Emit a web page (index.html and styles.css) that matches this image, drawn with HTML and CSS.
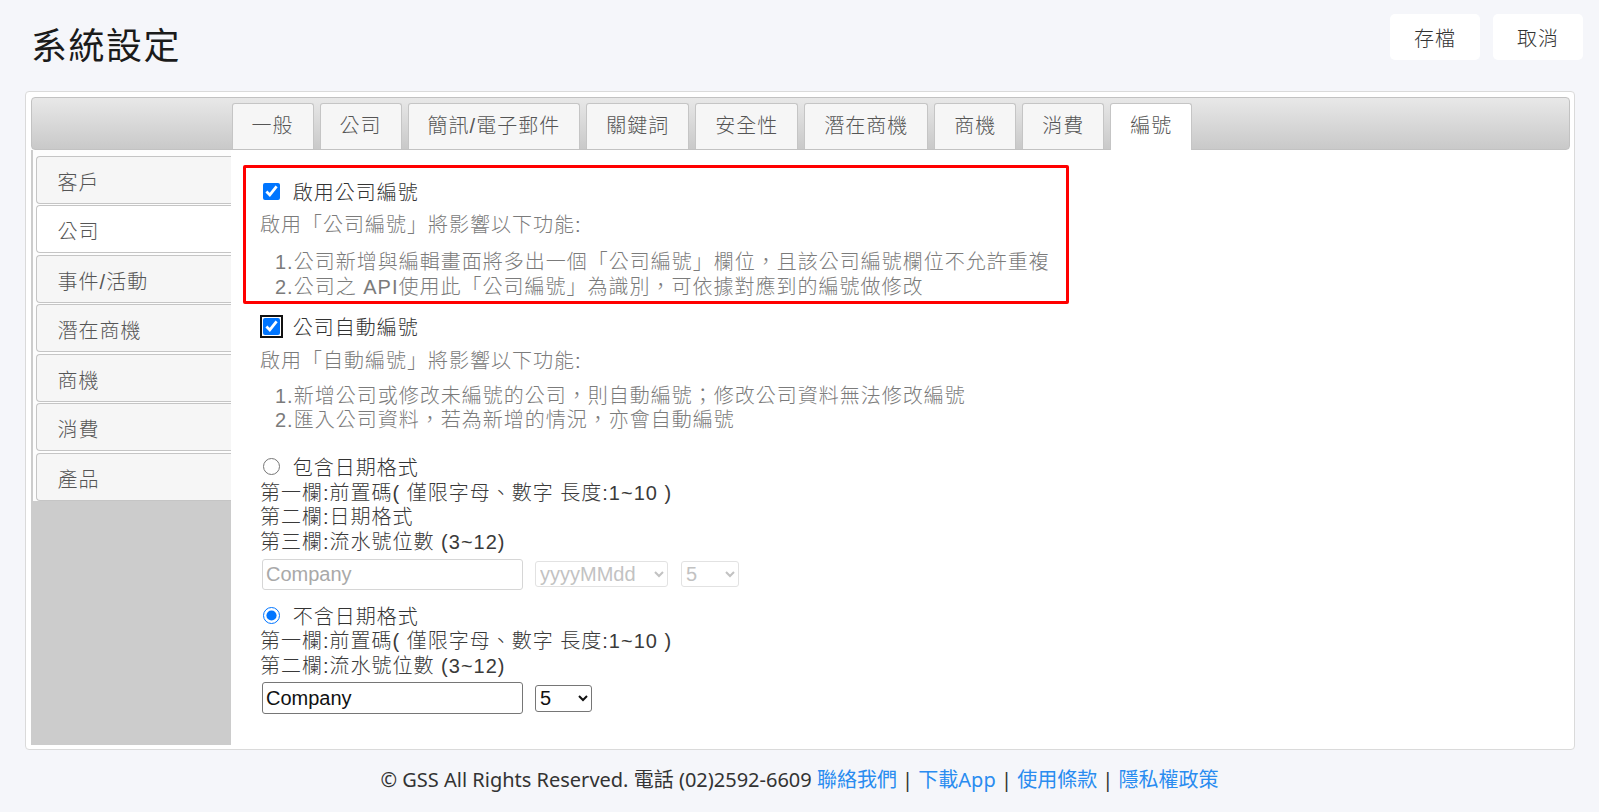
FILE: index.html
```html
<!DOCTYPE html>
<html lang="zh-Hant">
<head>
<meta charset="utf-8">
<title>系統設定</title>
<link rel="stylesheet" href="styles.css">
</head>
<body>
<header class="page-header">
  <h1 class="page-title">系統設定</h1>
  <div class="actions">
    <button class="btn" type="button">存檔</button>
    <button class="btn" type="button">取消</button>
  </div>
</header>

<main class="panel">
  <nav class="tabbar">
    <ul class="tabs">
      <li class="tab">一般</li>
      <li class="tab">公司</li>
      <li class="tab">簡訊/電子郵件</li>
      <li class="tab">關鍵詞</li>
      <li class="tab">安全性</li>
      <li class="tab">潛在商機</li>
      <li class="tab">商機</li>
      <li class="tab">消費</li>
      <li class="tab active">編號</li>
    </ul>
  </nav>

  <div class="panel-body">
    <aside class="side">
      <ul class="side-tabs">
        <li class="side-tab">客戶</li>
        <li class="side-tab active">公司</li>
        <li class="side-tab">事件/活動</li>
        <li class="side-tab">潛在商機</li>
        <li class="side-tab">商機</li>
        <li class="side-tab">消費</li>
        <li class="side-tab">產品</li>
      </ul>
    </aside>

    <section class="content">
      <div class="highlight">
        <label class="check-row"><input class="check" type="checkbox" checked><span>啟用公司編號</span></label>
        <p class="desc">啟用「公司編號」將影響以下功能:</p>
        <div class="notes">
          <div class="note">1.公司新增與編輯畫面將多出一個「公司編號」欄位，且該公司編號欄位不允許重複</div>
          <div class="note">2.公司之 API使用此「公司編號」為識別，可依據對應到的編號做修改</div>
        </div>
      </div>

      <div class="block">
        <label class="check-row"><input class="check focused" type="checkbox" checked><span>公司自動編號</span></label>
        <p class="desc">啟用「自動編號」將影響以下功能:</p>
        <div class="notes">
          <div class="note">1.新增公司或修改未編號的公司，則自動編號；修改公司資料無法修改編號</div>
          <div class="note">2.匯入公司資料，若為新增的情況，亦會自動編號</div>
        </div>
      </div>

      <div class="format first">
        <label class="radio-row"><input class="radio" type="radio" name="fmt"><span>包含日期格式</span></label>
        <div class="field-lines">
          <div>第一欄:前置碼( 僅限字母、數字 長度:1~10 )</div>
          <div>第二欄:日期格式</div>
          <div>第三欄:流水號位數 (3~12)</div>
        </div>
        <div class="controls">
          <input class="text-input disabled" type="text" placeholder="Company" disabled>
          <select class="sel sel-date" disabled><option>yyyyMMdd</option></select>
          <select class="sel sel-num-dis" disabled><option>5</option></select>
        </div>
      </div>

      <div class="format second">
        <label class="radio-row"><input class="radio" type="radio" name="fmt" checked><span>不含日期格式</span></label>
        <div class="field-lines">
          <div>第一欄:前置碼( 僅限字母、數字 長度:1~10 )</div>
          <div>第二欄:流水號位數 (3~12)</div>
        </div>
        <div class="controls">
          <input class="text-input active-input" type="text" value="Company">
          <select class="sel sel-num"><option>5</option></select>
        </div>
      </div>
    </section>
  </div>
</main>

<footer class="footer">
  © GSS All Rights Reserved. 電話 (02)2592-6609 <a class="link" href="#">聯絡我們</a> | <a class="link" href="#">下載App</a> | <a class="link" href="#">使用條款</a> | <a class="link" href="#">隱私權政策</a>
</footer>
</body>
</html>
```

FILE: styles.css
```css
* { box-sizing: border-box; }

html, body { margin: 0; padding: 0; }

body {
  width: 1599px;
  height: 812px;
  overflow: hidden;
  background: #f5f6fa;
  font-family: "Liberation Sans", Arial, "Noto Sans CJK TC", sans-serif;
  font-size: 20px;
  font-weight: 300;
  color: #333;
}

/* header */
.page-header {
  display: flex;
  justify-content: space-between;
  align-items: flex-start;
  height: 91px;
  padding: 0 16px 0 31px;
}

.page-title {
  margin: 0;
  padding-top: 29px;
  font-size: 36px;
  line-height: 36px;
  font-weight: 400;
  letter-spacing: 1.5px;
  color: #1b1b1b;
}

.actions {
  display: flex;
  gap: 13px;
  padding-top: 14px;
}

.btn {
  width: 90px;
  height: 46px;
  padding: 0;
  border: none;
  border-radius: 5px;
  background: #fff;
  font-family: inherit;
  font-size: 20px;
  font-weight: 300;
  letter-spacing: 1px;
  color: #333;
}

/* panel */
.panel {
  display: block;
  margin: 0 24px 0 25px;
  background: #fff;
  border: 1px solid #dadada;
  border-radius: 4px;
  padding: 5px 4px 4px 4.6px;
}

.tabbar {
  height: 53px;
  border: 1px solid #c2c2c2;
  border-radius: 4px;
  background: linear-gradient(#e8e8e8, #c9c9c9);
  padding: 5px 0 0 200px;
}

.tabs {
  list-style: none;
  margin: 0;
  padding: 0;
  display: flex;
  align-items: flex-start;
  gap: 6px;
  height: 46px;
}

.tab {
  height: 46px;
  padding: 0 19px;
  border: 1px solid #c5c5c5;
  border-bottom: 0;
  border-radius: 3px 3px 0 0;
  background: #f6f6f6;
  color: #555;
  line-height: 44px;
  letter-spacing: 1px;
  white-space: nowrap;
}

.tab.active {
  height: 47px;
  background: #fff;
  position: relative;
}

.panel-body {
  display: flex;
  height: 594.5px;
}

/* side tabs */
.side {
  width: 200.4px;
  flex: none;
  background: #cccccc;
}

.side-tabs {
  list-style: none;
  margin: 0 0 0 2px;
  padding: 5.5px 0 0 3px;
  background: #fdfdfd;
}

.side-tab {
  height: 48px;
  margin-bottom: 1.6px;
  padding: 7px 0 0 21px;
  border: 1px solid #c5c5c5;
  border-right: 0;
  border-radius: 4px 0 0 4px;
  background: #f6f6f6;
  color: #555;
  line-height: 38px;
  letter-spacing: 1px;
}

.side-tab:last-child { margin-bottom: 0; }

.side-tab.active { background: #fff; }

/* content */
.content {
  flex: 1;
  padding: 15px 0 0 29px;
  letter-spacing: 1px;
}

.highlight {
  width: 826px;
  margin-left: -17px;
  border: 3px solid #ff0000;
  border-radius: 2px;
  padding: 11px 0 2px 14px;
}

.block { margin-top: 10px; }

.check-row, .radio-row {
  display: flex;
  align-items: center;
  height: 24px;
  color: #333;
}

.check {
  width: 17px;
  height: 17px;
  margin: 0 12.7px 0 3px;
}

.check.focused {
  outline: 2px solid #111;
  outline-offset: 1px;
  border-radius: 3px;
}

.radio {
  width: 17px;
  height: 17px;
  margin: 0 12.7px 0 3px;
}

.desc {
  margin: 10px 0 0;
  line-height: 24px;
  color: #7b7b7b;
}

.block .desc { margin-top: 11px; }

.notes {
  margin-top: 13px;
  padding-left: 15px;
  color: #7b7b7b;
  line-height: 24.5px;
}

.block .notes { margin-top: 10.5px; }

.format.first { margin-top: 22px; }
.format.second { margin-top: 13.5px; }

.field-lines {
  margin-top: 2px;
  line-height: 24.5px;
  color: #3a3a3a;
}

.controls {
  display: flex;
  align-items: center;
  gap: 12px;
  margin-top: 5px;
  padding-left: 2px;
}

.second .controls { margin-top: 4px; }

.text-input {
  width: 261px;
  height: 30.5px;
  padding: 1px 3px;
  font-family: "Liberation Sans", Arial, sans-serif;
  font-size: 20px;
  letter-spacing: 0;
  border-radius: 3px;
}

.text-input.disabled {
  border: 1px solid #d6d6d6;
  background: #fff;
}

.text-input.disabled::placeholder { color: #a9a9a9; }

.text-input.active-input {
  height: 32px;
  border: 1px solid #767676;
  color: #111;
}

.sel {
  font-family: "Liberation Sans", Arial, sans-serif;
  font-size: 20px;
  letter-spacing: 0;
  border-radius: 3px;
  background: #fff;
}

.sel-date {
  width: 133px;
  height: 26px;
  color: #a9a9a9;
  border: 1px solid #d6d6d6;
}

.sel-num-dis {
  width: 58px;
  height: 26px;
  margin-left: 1px;
  color: #a9a9a9;
  border: 1px solid #d6d6d6;
}

.sel-num {
  width: 57.5px;
  height: 27px;
  color: #111;
  border: 1px solid #767676;
}

/* footer */
.footer {
  margin-top: 18.5px;
  text-align: center;
  line-height: 24px;
  font-family: "Noto Sans", "Noto Sans CJK TC", sans-serif;
  font-size: 20px;
  font-weight: 400;
  color: #333;
}

.link {
  color: #2a8cf0;
  text-decoration: none;
}
```
